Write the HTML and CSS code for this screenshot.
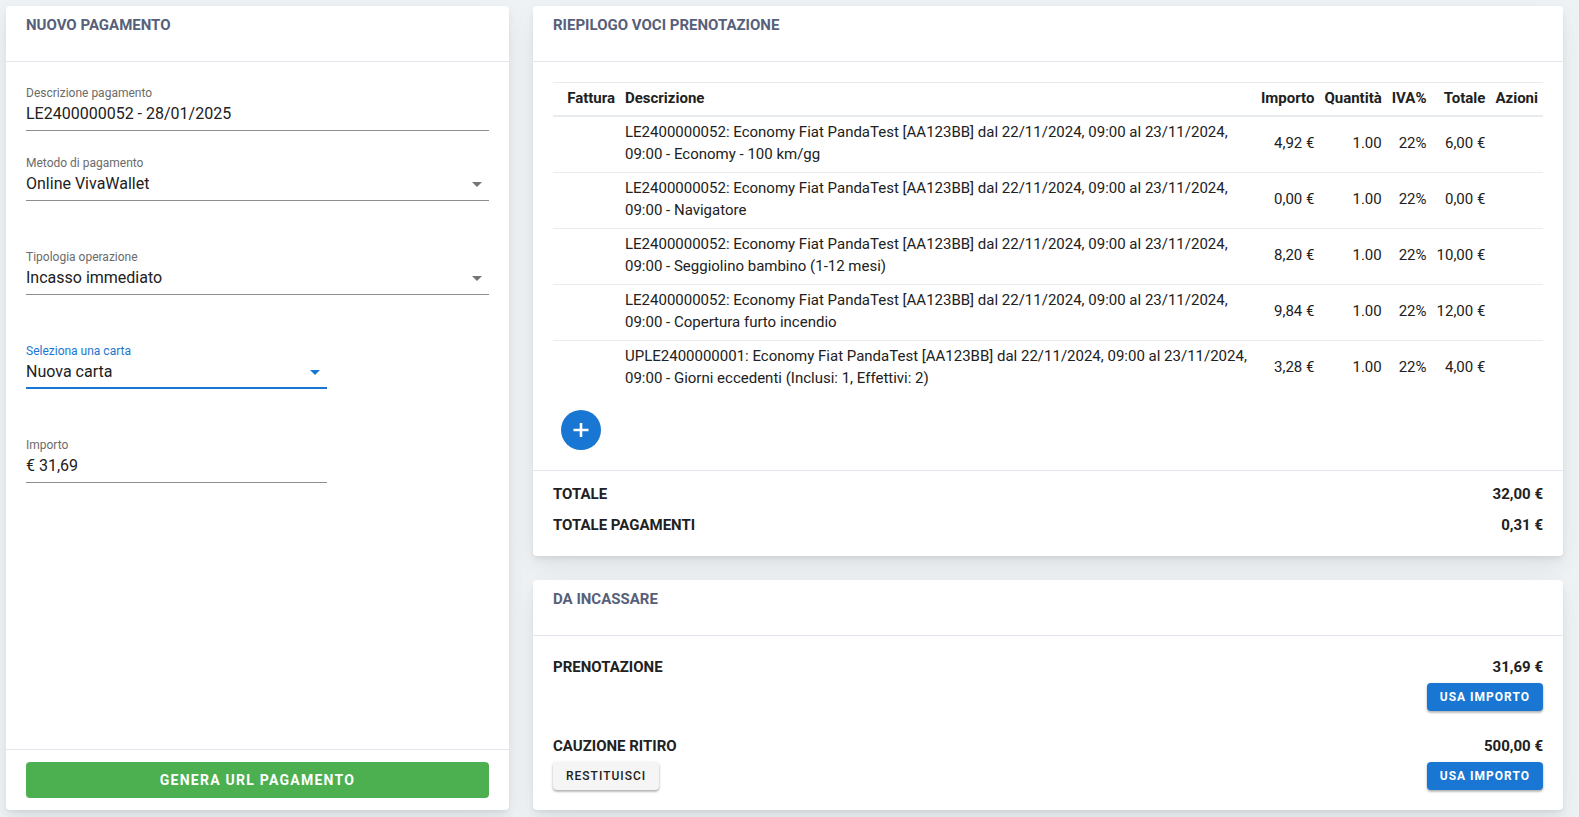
FILE: index.html
```html
<!DOCTYPE html>
<html lang="it">
<head>
<meta charset="utf-8">
<meta name="viewport" content="width=device-width, initial-scale=1">
<title>Nuovo pagamento</title>
<link rel="stylesheet" href="styles.css">
</head>
<body>
<main class="page">
  <form class="card payment">
    <header class="card-header"><h2 class="card-title">Nuovo pagamento</h2></header>
    <div class="card-body fields">
      <div class="field field-compact">
        <label class="field-label" for="descrizione">Descrizione pagamento</label>
        <input class="field-control" id="descrizione" type="text" value="LE2400000052 - 28/01/2025">
      </div>
      <div class="field">
        <label class="field-label" for="metodo">Metodo di pagamento</label>
        <div class="select-wrap">
          <select class="field-control" id="metodo"><option>Online VivaWallet</option></select>
          <svg class="arrow" viewBox="0 0 10 5" aria-hidden="true"><path d="M0 0h10L5 5z"/></svg>
        </div>
      </div>
      <div class="field">
        <label class="field-label" for="tipologia">Tipologia operazione</label>
        <div class="select-wrap">
          <select class="field-control" id="tipologia"><option>Incasso immediato</option></select>
          <svg class="arrow" viewBox="0 0 10 5" aria-hidden="true"><path d="M0 0h10L5 5z"/></svg>
        </div>
      </div>
      <div class="field field-narrow field-active">
        <label class="field-label" for="carta">Seleziona una carta</label>
        <div class="select-wrap">
          <select class="field-control" id="carta"><option>Nuova carta</option></select>
          <svg class="arrow" viewBox="0 0 10 5" aria-hidden="true"><path d="M0 0h10L5 5z"/></svg>
        </div>
      </div>
      <div class="field field-narrow">
        <label class="field-label" for="importo">Importo</label>
        <input class="field-control" id="importo" type="text" value="€ 31,69">
      </div>
    </div>
    <footer class="card-footer">
      <button class="btn btn-success" type="button">GENERA URL PAGAMENTO</button>
    </footer>
  </form>

  <div class="column">
    <section class="card">
      <header class="card-header"><h2 class="card-title">Riepilogo voci prenotazione</h2></header>
      <div class="card-body">
        <table class="items">
          <thead>
            <tr><th class="col-invoice">Fattura</th><th class="col-text">Descrizione</th><th>Importo</th><th>Quantità</th><th>IVA%</th><th>Totale</th><th>Azioni</th></tr>
          </thead>
          <tbody>
            <tr><td></td><td class="col-text">LE2400000052: Economy Fiat PandaTest [AA123BB] dal 22/11/2024, 09:00 al 23/11/2024, 09:00 - Economy - 100 km/gg</td><td>4,92 €</td><td>1.00</td><td>22%</td><td>6,00 €</td><td></td></tr>
            <tr><td></td><td class="col-text">LE2400000052: Economy Fiat PandaTest [AA123BB] dal 22/11/2024, 09:00 al 23/11/2024, 09:00 - Navigatore</td><td>0,00 €</td><td>1.00</td><td>22%</td><td>0,00 €</td><td></td></tr>
            <tr><td></td><td class="col-text">LE2400000052: Economy Fiat PandaTest [AA123BB] dal 22/11/2024, 09:00 al 23/11/2024, 09:00 - Seggiolino bambino (1-12 mesi)</td><td>8,20 €</td><td>1.00</td><td>22%</td><td>10,00 €</td><td></td></tr>
            <tr><td></td><td class="col-text">LE2400000052: Economy Fiat PandaTest [AA123BB] dal 22/11/2024, 09:00 al 23/11/2024, 09:00 - Copertura furto incendio</td><td>9,84 €</td><td>1.00</td><td>22%</td><td>12,00 €</td><td></td></tr>
            <tr><td></td><td class="col-text">UPLE2400000001: Economy Fiat PandaTest [AA123BB] dal 22/11/2024, 09:00 al 23/11/2024, 09:00 - Giorni eccedenti (Inclusi: 1, Effettivi: 2)</td><td>3,28 €</td><td>1.00</td><td>22%</td><td>4,00 €</td><td></td></tr>
          </tbody>
        </table>
        <button class="add" type="button" aria-label="Aggiungi voce">
          <svg width="24" height="24" viewBox="0 0 24 24" aria-hidden="true"><path d="M4.5 12h15M12 5v14" stroke="#fff" stroke-width="2.6"/></svg>
        </button>
      </div>
      <footer class="card-footer totals">
        <div class="line"><span>TOTALE</span><span>32,00 €</span></div>
        <div class="line"><span>TOTALE PAGAMENTI</span><span>0,31 €</span></div>
      </footer>
    </section>

    <section class="card">
      <header class="card-header"><h2 class="card-title">Da incassare</h2></header>
      <div class="card-body dues">
        <div class="due">
          <div class="line"><span>PRENOTAZIONE</span><span>31,69 €</span></div>
          <div class="actions"><button class="btn btn-small btn-primary" type="button">USA IMPORTO</button></div>
        </div>
        <div class="due">
          <div class="line"><span>CAUZIONE RITIRO</span><span>500,00 €</span></div>
          <div class="actions">
            <button class="btn btn-small btn-light" type="button">RESTITUISCI</button>
            <button class="btn btn-small btn-primary" type="button">USA IMPORTO</button>
          </div>
        </div>
      </div>
    </section>
  </div>
</main>
</body>
</html>
```
FILE: styles.css
```css
* { box-sizing: border-box; }

body {
  margin: 0;
  background: #eef2f5;
  color: #212121;
  font: 15px/22px Roboto, sans-serif;
}

.page {
  display: grid;
  grid-template-columns: repeat(12, minmax(0, 1fr));
  gap: 24px;
  min-height: 100vh;
  padding: 6px 16px 7px 6px;
}

.payment { grid-column: span 4; }

.column {
  grid-column: span 8;
  display: flex;
  flex-direction: column;
  gap: 24px;
}

.card {
  display: flex;
  flex-direction: column;
  background: #fff;
  border-radius: 4px;
  box-shadow:
    0 8px 35px rgba(4, 9, 20, 0.03),
    0 15px 22px rgba(4, 9, 20, 0.03),
    0 4px 8px rgba(4, 9, 20, 0.05),
    0 2px 3px rgba(4, 9, 20, 0.03);
}

.card-header {
  min-height: 56px;
  padding: 8px 20px;
  border-bottom: 1px solid #e2e4ee;
}

.card-title {
  margin: 0;
  color: #56607a;
  font-size: 15px;
  font-weight: 700;
  line-height: 22px;
  text-transform: uppercase;
}

.card-body {
  flex: 1;
  padding: 20px;
}

.card-footer {
  display: flex;
  flex-direction: column;
  padding: 12px 20px;
  border-top: 1px solid #e2e4ee;
}

/* Form fields */
.fields {
  display: grid;
  grid-template-columns: repeat(12, minmax(0, 1fr));
  column-gap: 24px;
  align-content: start;
  padding-top: 23px;
}

.field {
  grid-column: span 12;
  margin-bottom: 48px;
}

.field-compact { margin-bottom: 24px; }
.field-narrow { grid-column: span 8; }

.field-label {
  display: block;
  color: #6b6b6b;
  font-size: 12px;
  line-height: 16px;
}

.field-control {
  display: block;
  width: 100%;
  height: 30px;
  margin: 0;
  padding: 0 0 4px;
  border: 0;
  border-bottom: 1px solid #8e8e8e;
  border-radius: 0;
  outline: 0;
  background: transparent;
  color: #212121;
  font: 16px/24px Roboto, sans-serif;
  appearance: none;
}

.select-wrap { position: relative; }

.arrow {
  position: absolute;
  top: 11px;
  right: 7px;
  width: 10px;
  height: 5px;
  fill: #757575;
  pointer-events: none;
}

.field-active .field-label { color: #1976d2; }
.field-active .arrow { fill: #1976d2; }
.field-active .field-control {
  padding-bottom: 3px;
  border-bottom: 2px solid #1976d2;
}

/* Booking items */
.items {
  width: 100%;
  border-collapse: separate;
  border-spacing: 0;
  border-top: 1px solid #e9ecef;
}

.items th,
.items td {
  padding: 4px 5px 7px;
  text-align: right;
  white-space: nowrap;
}

.items th {
  padding-bottom: 6px;
  border-bottom: 2px solid #e9ecef;
  font-weight: 700;
}

.items td { border-bottom: 1px solid #e9ecef; }
.items tbody tr:last-child td { border-bottom: 0; }
.items .col-invoice { min-width: 67px; }

.items .col-text {
  width: 100%;
  text-align: left;
  white-space: normal;
}

.add {
  display: flex;
  align-items: center;
  justify-content: center;
  width: 40px;
  height: 40px;
  margin: 14px 0 0 8px;
  padding: 0;
  border: 0;
  border-radius: 50%;
  background: #1976d2;
}

/* Totals and amounts due */
.line {
  display: flex;
  justify-content: space-between;
  font-weight: 700;
}

.totals {
  gap: 9px;
  padding-bottom: 20px;
}

.dues {
  display: flex;
  flex-direction: column;
  gap: 24px;
}

.actions {
  display: flex;
  margin-top: 5px;
}

/* Buttons */
.btn {
  height: 36px;
  padding: 0 13px;
  border: 0;
  border-radius: 4px;
  font: 700 14px/20px Roboto, sans-serif;
  letter-spacing: 1.25px;
}

.btn-success {
  background: #4caf50;
  color: #fff;
}

.btn-small {
  height: 28px;
  font-size: 12px;
  letter-spacing: 1px;
  box-shadow: 0 2px 2px rgba(0, 0, 0, 0.16), 0 1px 3px rgba(0, 0, 0, 0.22);
}

.btn-primary {
  margin-left: auto;
  background: #1976d2;
  color: #fff;
}

.btn-light {
  background: #f5f5f5;
  color: #212121;
  font-weight: 500;
}
```
